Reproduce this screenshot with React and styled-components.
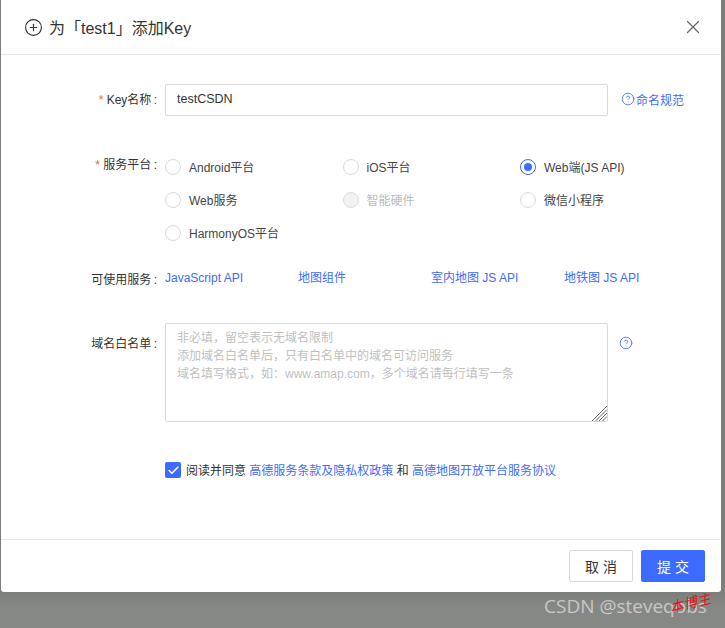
import styled, { createGlobalStyle } from "styled-components";
import { CirclePlus, CircleHelp, X, Check } from "lucide-react";

const FONT = `"Liberation Sans", "Noto Sans CJK SC", sans-serif`;
const BLUE = "#3e6bff";

const GlobalStyle = createGlobalStyle`
  html, body { margin: 0; padding: 0; }
  body { background: #868886; font-family: ${FONT}; overflow: hidden; }
  * { box-sizing: border-box; }
`;

const platforms = [
  { name: "Android平台" },
  { name: "iOS平台" },
  { name: "Web端(JS API)", checked: true },
  { name: "Web服务" },
  { name: "智能硬件", disabled: true },
  { name: "微信小程序" },
  { name: "HarmonyOS平台" },
];

const services = ["JavaScript API", "地图组件", "室内地图 JS API", "地铁图 JS API"];

const placeholder = `非必填，留空表示无域名限制
添加域名白名单后，只有白名单中的域名可访问服务
域名填写格式，如：www.amap.com，多个域名请每行填写一条`;

const App = () => {
  return (
    <Page>
      <GlobalStyle />
      <Modal>
        <Header>
          <CirclePlus size={19} strokeWidth={1.4} color="#333" />
          <Title>为「test1」添加Key</Title>
          <CloseButton><X size={22} strokeWidth={1.3} /></CloseButton>
        </Header>
        <Body>
          <KeyRow>
            <KeyLabel required>Key名称 :</KeyLabel>
            <TextInput defaultValue="testCSDN" />
            <HelpLink href="#"><CircleHelp size={14} strokeWidth={1.4} />命名规范</HelpLink>
          </KeyRow>
          <PlatformRow>
            <PlatformLabel required>服务平台 :</PlatformLabel>
            <RadioGrid>
              {platforms.map((p) => (
                <RadioItem key={p.name} disabled={p.disabled}>
                  <RadioDot checked={p.checked} disabled={p.disabled} />
                  {p.name}
                </RadioItem>
              ))}
            </RadioGrid>
          </PlatformRow>
          <ServiceRow>
            <Label>可使用服务 :</Label>
            <ServiceGrid>
              {services.map((s) => <Link key={s} href="#">{s}</Link>)}
            </ServiceGrid>
          </ServiceRow>
          <WhitelistRow>
            <WhitelistLabel>域名白名单 :</WhitelistLabel>
            <AreaWrap>
              <Area placeholder={placeholder} />
              <ResizeGrip viewBox="0 0 15 15">
                <path d="M15 0L0 15M15 3.5L3.5 15M15 7L7 15M15 10.5L10.5 15" stroke="#666" strokeWidth="1" fill="none" />
              </ResizeGrip>
            </AreaWrap>
            <AreaHelp><CircleHelp size={14} strokeWidth={1.4} /></AreaHelp>
          </WhitelistRow>
          <AgreeRow>
            <CheckBox><Check size={13} strokeWidth={3} color="#fff" /></CheckBox>
            <AgreeText>阅读并同意 <Link href="#">高德服务条款及隐私权政策</Link> 和 <Link href="#">高德地图开放平台服务协议</Link></AgreeText>
          </AgreeRow>
        </Body>
        <Footer>
          <Button>取 消</Button>
          <Button primary>提 交</Button>
        </Footer>
      </Modal>
      <Watermark>CSDN @steveqobs</Watermark>
      <Scribble>本博主</Scribble>
    </Page>
  );
};

const Page = styled.div`
  position: relative;
  width: 725px;
  height: 628px;
  padding-left: 1px;
  background: linear-gradient(#7c7e7c 592px, #868886 606px);
`;

const Modal = styled.div`
  width: 720px;
  height: 592px;
  background: #fff;
  border-radius: 0 0 3px 3px;
  display: flex;
  flex-direction: column;
`;

const Header = styled.div`
  height: 55px;
  flex: none;
  display: flex;
  align-items: center;
  gap: 6px;
  padding: 0 17px 0 23px;
  border-bottom: 1px solid #e8e8e8;
`;

const Title = styled.div`
  flex: 1;
  font-size: 16px;
  color: #333;
`;

const CloseButton = styled.div`
  display: flex;
  color: #666;
`;

const Body = styled.div`
  flex: 1;
  padding-top: 29px;
  font-size: 12px;
  color: #333;
`;

const KeyRow = styled.div`
  display: flex;
  align-items: center;
  height: 32px;
`;

const Label = styled.div`
  width: 156px;
  margin-right: 8px;
  flex: none;
  text-align: right;
  color: #333;
  word-spacing: -1px;
  &::before {
    content: ${(p) => (p.required ? `"* "` : `""`)};
    margin-right: ${(p) => (p.required ? "1px" : "0")};
    color: #f5603a;
  }
`;

const KeyLabel = styled(Label)`
  padding-bottom: 3px;
`;

const TextInput = styled.input`
  width: 443px;
  height: 32px;
  padding: 0 11px 2px;
  border: 1px solid #d9d9d9;
  border-radius: 2px;
  font: 12.5px ${FONT};
  color: #333;
  outline: none;
`;

const HelpLink = styled.a`
  display: inline-flex;
  align-items: center;
  gap: 1px;
  margin-left: 13px;
  padding-bottom: 2px;
  color: ${BLUE};
  text-decoration: none;
`;

const PlatformRow = styled.div`
  display: flex;
  margin-top: 34px;
`;

const PlatformLabel = styled(Label)`
  line-height: 30px;
`;

const RadioGrid = styled.div`
  display: grid;
  grid-template-columns: repeat(3, 177.5px);
  grid-auto-rows: 33px;
`;

const RadioItem = styled.div`
  display: flex;
  align-items: center;
  gap: 8px;
  color: ${(p) => (p.disabled ? "#bbb" : "#444")};
`;

const RadioDot = styled.span`
  width: 16px;
  height: 16px;
  border-radius: 50%;
  border: 1px solid ${(p) => (p.checked ? BLUE : "#d9d9d9")};
  background: ${(p) => (p.disabled ? "#f2f2f2" : "#fff")};
  display: flex;
  align-items: center;
  justify-content: center;
  &::after {
    content: "";
    display: ${(p) => (p.checked ? "block" : "none")};
    width: 8px;
    height: 8px;
    border-radius: 50%;
    background: ${BLUE};
  }
`;

const ServiceRow = styled.div`
  display: flex;
  align-items: center;
  height: 18px;
  margin-top: 20px;
`;

const ServiceGrid = styled.div`
  display: grid;
  grid-template-columns: repeat(4, 133px);
  align-items: center;
  line-height: 18px;
`;

const Link = styled.a`
  color: ${BLUE};
  text-decoration: none;
`;

const WhitelistRow = styled.div`
  display: flex;
  align-items: flex-start;
  margin-top: 36px;
`;

const WhitelistLabel = styled(Label)`
  line-height: 42px;
`;

const AreaWrap = styled.div`
  position: relative;
  display: flex;
`;

const Area = styled.textarea`
  width: 443px;
  height: 99px;
  padding: 5px 11px;
  border: 1px solid #d9d9d9;
  border-radius: 2px;
  font: 12px/18px ${FONT};
  outline: none;
  resize: none;
  &::placeholder { color: #bfbfbf; }
`;

const ResizeGrip = styled.svg`
  position: absolute;
  right: 1px;
  bottom: 1px;
  width: 15px;
  height: 15px;
`;

const AreaHelp = styled.span`
  display: flex;
  margin: 13px 0 0 11px;
  color: ${BLUE};
`;

const AgreeRow = styled.div`
  display: flex;
  align-items: center;
  gap: 5px;
  height: 16px;
  margin: 40px 0 0 164px;
`;

const AgreeText = styled.span`
  padding-bottom: 2px;
`;

const CheckBox = styled.span`
  width: 16px;
  height: 16px;
  border-radius: 2px;
  background: ${BLUE};
  display: flex;
  align-items: center;
  justify-content: center;
`;

const Footer = styled.div`
  height: 53px;
  flex: none;
  display: flex;
  justify-content: flex-end;
  gap: 8px;
  padding: 10px 16px 0 0;
  border-top: 1px solid #e8e8e8;
`;

const Button = styled.button`
  width: 64px;
  height: 32px;
  border-radius: 2px;
  border: 1px solid ${(p) => (p.primary ? BLUE : "#d9d9d9")};
  background: ${(p) => (p.primary ? BLUE : "#fff")};
  color: ${(p) => (p.primary ? "#fff" : "#333")};
  font: 14px ${FONT};
`;

const Watermark = styled.div`
  position: absolute;
  left: 544px;
  top: 595px;
  font: 19px/22px "Open Sans", sans-serif;
  color: rgba(255, 255, 255, 0.55);
  white-space: nowrap;
`;

const Scribble = styled.div`
  position: absolute;
  left: 669px;
  top: 593px;
  font: italic 14px/18px "Noto Sans CJK SC", sans-serif;
  color: #e0141c;
  transform: rotate(-14deg);
  white-space: nowrap;
`;

export default App;
